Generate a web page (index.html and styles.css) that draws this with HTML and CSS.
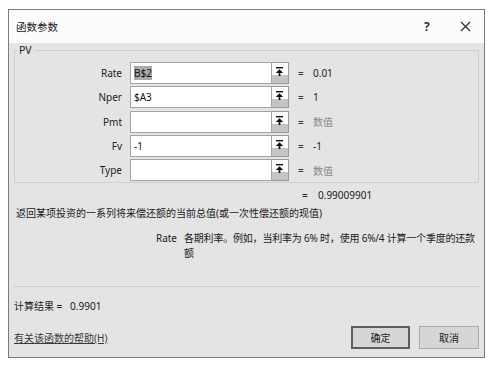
FILE: index.html
```html
<!DOCTYPE html>
<html lang="zh-CN">
<head>
<meta charset="utf-8">
<title>函数参数</title>
<link rel="stylesheet" href="styles.css">
</head>
<body>
<div class="dialog">
  <div class="titlebar">
    <span class="title">函数参数</span>
    <span class="help-q">?</span>
    <span class="close">
      <svg width="11" height="11" viewBox="0 0 11 11"><path d="M1 1L10 10M10 1L1 10" stroke="#333" stroke-width="1.3" fill="none"/></svg>
    </span>
  </div>
  <div class="body">
    <fieldset class="group">
      <legend>PV</legend>
      <div class="row">
        <span class="lbl">Rate</span>
        <span class="field"><span class="sel">B$2</span></span>
        <span class="pick"><svg width="17" height="22" viewBox="0 0 17 22"><rect x="5" y="4" width="7" height="1.4" fill="#111"/><path d="M8.5 6.2L4.8 10H12.2Z" fill="#111"/><rect x="7.6" y="10" width="1.8" height="3" fill="#111"/></svg></span>
        <span class="eq">=</span>
        <span class="val">0.01</span>
      </div>
      <div class="row">
        <span class="lbl">Nper</span>
        <span class="field">$A3</span>
        <span class="pick"><svg width="17" height="22" viewBox="0 0 17 22"><rect x="5" y="4" width="7" height="1.4" fill="#111"/><path d="M8.5 6.2L4.8 10H12.2Z" fill="#111"/><rect x="7.6" y="10" width="1.8" height="3" fill="#111"/></svg></span>
        <span class="eq">=</span>
        <span class="val">1</span>
      </div>
      <div class="row">
        <span class="lbl">Pmt</span>
        <span class="field"></span>
        <span class="pick"><svg width="17" height="22" viewBox="0 0 17 22"><rect x="5" y="4" width="7" height="1.4" fill="#111"/><path d="M8.5 6.2L4.8 10H12.2Z" fill="#111"/><rect x="7.6" y="10" width="1.8" height="3" fill="#111"/></svg></span>
        <span class="eq">=</span>
        <span class="val dim">数值</span>
      </div>
      <div class="row">
        <span class="lbl">Fv</span>
        <span class="field">-1</span>
        <span class="pick"><svg width="17" height="22" viewBox="0 0 17 22"><rect x="5" y="4" width="7" height="1.4" fill="#111"/><path d="M8.5 6.2L4.8 10H12.2Z" fill="#111"/><rect x="7.6" y="10" width="1.8" height="3" fill="#111"/></svg></span>
        <span class="eq">=</span>
        <span class="val">-1</span>
      </div>
      <div class="row">
        <span class="lbl">Type</span>
        <span class="field"></span>
        <span class="pick"><svg width="17" height="22" viewBox="0 0 17 22"><rect x="5" y="4" width="7" height="1.4" fill="#111"/><path d="M8.5 6.2L4.8 10H12.2Z" fill="#111"/><rect x="7.6" y="10" width="1.8" height="3" fill="#111"/></svg></span>
        <span class="eq">=</span>
        <span class="val dim">数值</span>
      </div>
    </fieldset>
    <div class="total"><span class="eq2">=</span><span>0.99009901</span></div>
    <div class="desc">返回某项投资的一系列将来偿还额的当前总值(或一次性偿还额的现值)</div>
    <div class="argdesc">
      <span class="arglbl">Rate</span>
      <span class="argtext">各期利率。例如，当利率为 6% 时，使用 6%/4 计算一个季度的还款额</span>
    </div>
    <div class="sep"></div>
    <div class="result">计算结果 =&nbsp;&nbsp; 0.9901</div>
    <div class="footer">
      <a class="link" href="#">有关该函数的帮助(H)</a>
      <span class="btn ok">确定</span>
      <span class="btn cancel">取消</span>
    </div>
  </div>
</div>
</body>
</html>
```

FILE: styles.css
```css
html, body {
  margin: 0;
  padding: 0;
  background: #ffffff;
}
body {
  font-family: "Noto Sans", "Noto Sans CJK SC", sans-serif;
  font-size: 10px;
  color: #222;
}
.dialog {
  margin: 9px 0 0 8px;
  width: 475px;
  height: 347px;
  border: 1px solid #7c7c7c;
  background: #e4e4e4;
  display: flex;
  flex-direction: column;
}
.titlebar {
  height: 33px;
  flex: none;
  background: #fcfcfc;
  display: flex;
  align-items: center;
  padding-left: 7px;
  font-size: 10.5px;
}
.title {
  flex: 1;
  color: #222;
}
.help-q {
  width: 12px;
  font-size: 12px;
  font-weight: bold;
  color: #333;
  margin-right: 24px;
}
.close {
  width: 11px;
  height: 11px;
  margin-right: 13px;
  display: flex;
}
.body {
  display: flex;
  flex-direction: column;
  padding: 0 5px;
  flex: 1;
}
.group {
  margin: 0;
  padding: 5px 0 1px 0;
  border: 1px solid #cfcfcf;
  display: flex;
  flex-direction: column;
  gap: 2.25px;
}
.group legend {
  margin-left: 2px;
  padding: 0 2px;
  font-size: 10.5px;
  line-height: 14px;
  color: #222;
}
.row {
  display: flex;
  align-items: center;
  height: 22px;
}
.lbl {
  width: 107px;
  margin-right: 8px;
  text-align: right;
  color: #222;
}
.field {
  box-sizing: border-box;
  width: 142px;
  height: 22px;
  background: #fff;
  border: 1px solid #a4a4a4;
  padding-left: 3px;
  display: flex;
  align-items: center;
  color: #111;
}
.sel {
  background: #a9a9a9;
  color: #111;
}
.pick {
  box-sizing: border-box;
  width: 17px;
  height: 22px;
  border: 1px solid #9a9a9a;
  border-left: none;
  background: linear-gradient(#ffffff 0 62%, #c4c4c4 62%);
  display: flex;
}
.pick svg {
  margin-left: -1px;
}
.eq {
  margin-left: 9px;
  width: 15px;
  color: #333;
}
.val {
  color: #222;
}
.dim {
  color: #8a8a8a;
}
.total {
  margin-top: 4px;
  height: 16px;
  display: flex;
  align-items: center;
  padding-left: 288px;
}
.eq2 {
  width: 16px;
}
.desc {
  margin-top: 2px;
  height: 16px;
  line-height: 16px;
  padding-left: 2px;
  color: #1a1a1a;
}
.argdesc {
  margin-top: 10px;
  display: flex;
  line-height: 15px;
}
.arglbl {
  width: 163px;
  text-align: right;
  padding-right: 7px;
  flex: none;
}
.argtext {
  width: 300px;
  letter-spacing: -0.2px;
  color: #1a1a1a;
}
.sep {
  margin-top: 25px;
  height: 1px;
  background: #cdcdcd;
}
.result {
  margin-top: 11px;
  height: 16px;
  line-height: 16px;
  color: #1a1a1a;
}
.footer {
  margin-top: 12px;
  display: flex;
  align-items: center;
  height: 23px;
}
.link {
  flex: 1;
  color: #3a3a3a;
  text-decoration: underline;
}
.btn {
  box-sizing: border-box;
  height: 23px;
  display: flex;
  align-items: center;
  justify-content: center;
  background: #d6d6d6;
  color: #222;
}
.ok {
  width: 59px;
  border: 2px solid #5e5e5e;
  margin-right: 9px;
}
.cancel {
  width: 60px;
  border: 1px solid #acacac;
}
```
